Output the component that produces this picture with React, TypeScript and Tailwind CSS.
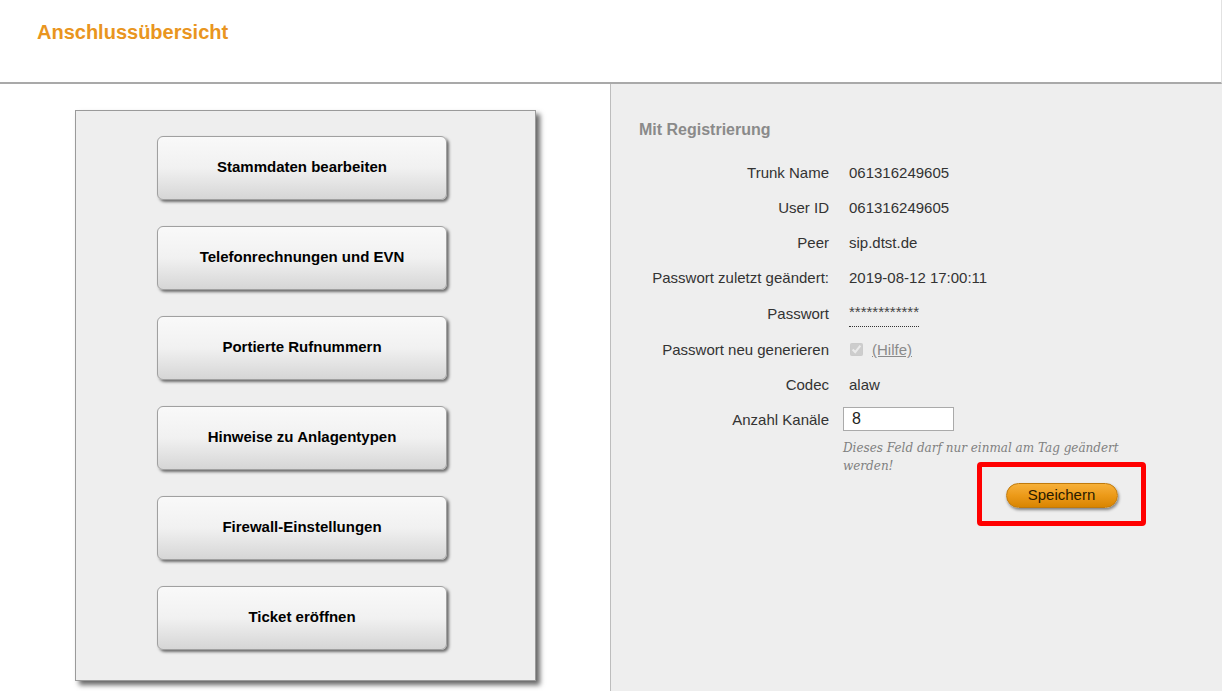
import { useState } from "react";

const menu = [
    "Stammdaten bearbeiten",
    "Telefonrechnungen und EVN",
    "Portierte Rufnummern",
    "Hinweise zu Anlagentypen",
    "Firewall-Einstellungen",
    "Ticket eröffnen",
];

const info: [string, string][] = [
    ["Trunk Name", "061316249605"],
    ["User ID", "061316249605"],
    ["Peer", "sip.dtst.de"],
    ["Passwort zuletzt geändert:", "2019-08-12 17:00:11"],
];

function Row({ label, children, h = "h-[35px]" }: { label: string; children: React.ReactNode; h?: string }) {
    return (
        <div className={`flex items-center ${h}`}>
            <div className="w-[190px] shrink-0 text-right text-[15px] text-[#333]">{label}</div>
            <div className="ml-[20px] flex items-center text-[15px] text-[#333]">{children}</div>
        </div>
    );
}

export default function App() {
    const [channels, setChannels] = useState("8");

    return (
        <div className="w-[1222px] h-[691px] overflow-hidden bg-white font-['Liberation_Sans',Arial,sans-serif] flex flex-col">
            {/* header */}
            <div className="h-[84px] shrink-0 border-b-2 border-[#a9a9a9] border-r border-r-[#e2e2e2] pl-[37px] pt-[20px]">
                <h1 className="text-[20px] leading-6 font-bold text-[#e99520]">Anschlussübersicht</h1>
            </div>

            <div className="flex flex-1 min-h-0">
                {/* left menu */}
                <div className="w-[610px] shrink-0 bg-white pl-[75px] pt-[26px]">
                    <div className="w-[461px] h-[571px] bg-[#eeeeee] border border-[#9a9a9a] shadow-[4px_4px_5px_rgba(0,0,0,0.6)] pl-[81px] pt-[25px] flex flex-col gap-[26px]">
                        {menu.map((m) => (
                            <button
                                key={m}
                                className="w-[290px] h-[64px] shrink-0 rounded-[6px] border border-[#a0a0a0] bg-gradient-to-b from-[#f9f9f9] via-[#f1f1f1] to-[#d6d6d6] shadow-[2px_2px_3px_rgba(0,0,0,0.55)] pb-[2px] text-[15px] font-bold text-black"
                            >
                                {m}
                            </button>
                        ))}
                    </div>
                </div>

                {/* right form */}
                <div className="flex-1 bg-[#eeeeee] border-l border-[#bdbdbd] pl-[28px] pt-[36px]">
                    <h2 className="text-[16px] leading-5 font-bold text-[#8a8a8a]">Mit Registrierung</h2>

                    <div className="mt-[16px]">
                        {info.map(([l, v]) => (
                            <Row key={l} label={l}>
                                {v}
                            </Row>
                        ))}
                        <Row label="Passwort" h="h-[37px]">
                            <span className="leading-5 pb-[4px] border-b border-dotted border-[#333] text-[15px] text-[#444]">
                                ************
                            </span>
                        </Row>
                        <Row label="Passwort neu generieren">
                            <input
                                type="checkbox"
                                checked
                                disabled
                                readOnly
                                className="w-[13px] h-[13px] m-0 ml-[1px] -mt-[3px]"
                            />
                            <a className="ml-[9px] text-[#8a8a8a] underline cursor-pointer">(Hilfe)</a>
                        </Row>
                        <Row label="Codec">alaw</Row>
                        <Row label="Anzahl Kanäle">
                            <input
                                value={channels}
                                onChange={(e) => setChannels(e.target.value)}
                                className="-ml-[6px] -mt-[4px] w-[111px] h-[24px] bg-white border border-[#aaa] px-[8px] text-[16px] text-[#222] outline-none"
                            />
                        </Row>
                    </div>

                    <p className="ml-[204px] mt-[1px] w-[285px] text-[12px] leading-[18px] italic text-[#808080] font-['DejaVu_Serif',Georgia,serif]">
                        Dieses Feld darf nur einmal am Tag geändert werden!
                    </p>

                    <div className="ml-[338px] -mt-[13px] w-[169px] h-[64px] border-[5px] border-[#ff0000] rounded-[4px] flex justify-center pt-[16px]">
                        <button className="w-[112px] h-[25px] rounded-full border border-[#c07a0c] bg-gradient-to-b from-[#f6b038] via-[#ec9a18] to-[#d98500] shadow-[1px_2px_3px_rgba(0,0,0,0.45)] text-[15px] text-[#2a1a00]">
                            Speichern
                        </button>
                    </div>
                </div>
            </div>
        </div>
    );
}
